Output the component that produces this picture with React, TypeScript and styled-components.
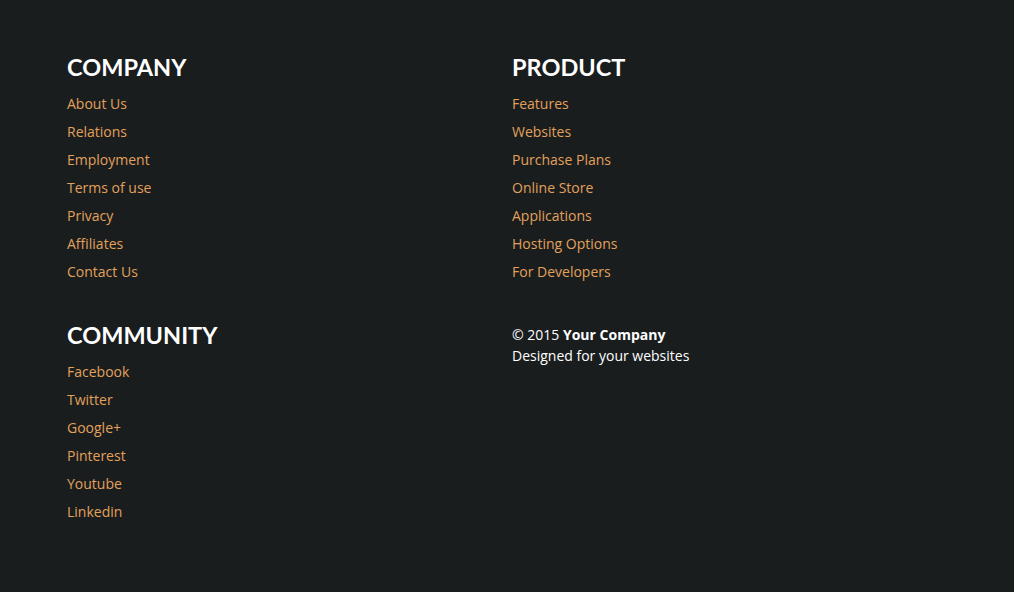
import React from 'react';
import styled, { createGlobalStyle } from 'styled-components';

const GlobalStyle = createGlobalStyle`
  html, body {
    margin: 0;
    padding: 0;
    background-color: #1a1d1e;
  }
`;

const Footer = styled.footer`
  min-height: 592px;
  box-sizing: border-box;
  padding: 52px 67px 0;
  background-color: #1a1d1e;
  font-family: 'Open Sans', sans-serif;
`;

const Grid = styled.div`
  display: grid;
  grid-template-columns: 445px 445px;
  row-gap: 34px;
`;

const Column = styled.div``;

const Heading = styled.h3`
  margin: 0 0 8px;
  font-family: Lato, 'Open Sans', sans-serif;
  font-weight: 700;
  font-size: 23.5px;
  line-height: 30px;
  color: #ffffff;
`;

const LinkList = styled.ul`
  list-style: none;
  margin: 0;
  padding: 0;
`;

const LinkItem = styled.li`
  line-height: 28px;
  font-size: 14px;
`;

const FooterLink = styled.a`
  color: #e1a15c;
  text-decoration: none;
`;

const Copy = styled.p`
  margin: 0;
  padding-top: 4px;
  font-size: 14px;
  line-height: 21px;
  color: #ffffff;

  strong {
    font-weight: 700;
  }
`;

const company = ['About Us', 'Relations', 'Employment', 'Terms of use', 'Privacy', 'Affiliates', 'Contact Us'];
const product = ['Features', 'Websites', 'Purchase Plans', 'Online Store', 'Applications', 'Hosting Options', 'For Developers'];
const community = ['Facebook', 'Twitter', 'Google+', 'Pinterest', 'Youtube', 'Linkedin'];

const Section = ({ title, links }: { title: string; links: string[] }) => (
  <Column>
    <Heading>{title}</Heading>
    <LinkList>
      {links.map((l) => (
        <LinkItem key={l}>
          <FooterLink href="#">{l}</FooterLink>
        </LinkItem>
      ))}
    </LinkList>
  </Column>
);

export default function App() {
  return (
    <>
      <GlobalStyle />
      <Footer>
        <Grid>
          <Section title="COMPANY" links={company} />
          <Section title="PRODUCT" links={product} />
          <Section title="COMMUNITY" links={community} />
          <Column>
            <Copy>
              &copy; 2015 <strong>Your Company</strong>
              <br />
              Designed for your websites
            </Copy>
          </Column>
        </Grid>
      </Footer>
    </>
  );
}
